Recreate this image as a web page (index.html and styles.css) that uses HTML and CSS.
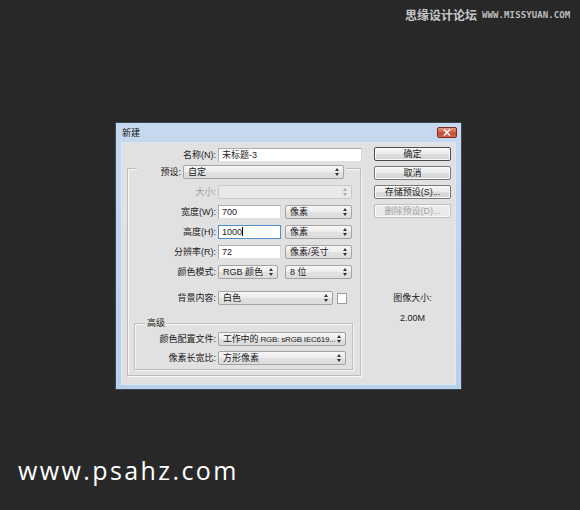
FILE: index.html
```html
<!DOCTYPE html>
<html>
<head>
<meta charset="utf-8">
<title>新建</title>
<link rel="stylesheet" href="styles.css">
</head>
<body>
<div class="dialog">
  <div class="titlebar">
    <span class="title">新建</span>
    <span class="close"><svg width="8" height="7" viewBox="0 0 8 7"><path d="M1 0.5 L7 6.5 M7 0.5 L1 6.5" stroke="#fff" stroke-width="1.6"/></svg></span>
  </div>
  <div class="content">
    <div class="left">
      <div class="row name-row">
        <span class="lbl lbl-name">名称(N):</span>
        <div class="input w144">未标题-3</div>
      </div>
      <div class="group">
        <div class="legend-row">
          <span class="lbl lbl-preset">预设:</span>
          <div class="select w161">自定</div>
        </div>
        <div class="rows">
          <div class="row"><span class="lbl dis">大小:</span><div class="select disabled w134"></div></div>
          <div class="row"><span class="lbl">宽度(W):</span><div class="input w63">700</div><div class="select w67">像素</div></div>
          <div class="row"><span class="lbl">高度(H):</span><div class="input focus w63">1000<span class="caret"></span></div><div class="select w67">像素</div></div>
          <div class="row"><span class="lbl">分辨率(R):</span><div class="input w63">72</div><div class="select w67">像素/英寸</div></div>
          <div class="row"><span class="lbl">颜色模式:</span><div class="select w60">RGB 颜色</div><div class="select w67 sel-gap">8 位</div></div>
          <div class="row bg-row"><span class="lbl">背景内容:</span><div class="select w115">白色</div><span class="swatch"></span></div>
        </div>
        <div class="subgroup">
          <div class="sublegend">高级</div>
          <div class="subrows">
            <div class="row"><span class="lbl lbl-sub">颜色配置文件:</span><div class="select w128 tight">工作中的 <span class="latin">RGB: sRGB IEC619...</span></div></div>
            <div class="row"><span class="lbl lbl-sub">像素长宽比:</span><div class="select w128">方形像素</div></div>
          </div>
        </div>
      </div>
    </div>
    <div class="right">
      <div class="btn default">确定</div>
      <div class="btn">取消</div>
      <div class="btn">存储预设(S)...</div>
      <div class="btn btn-dis">删除预设(D)...</div>
      <div class="info">
        <div class="info-title">图像大小:</div>
        <div class="info-val">2.00M</div>
      </div>
    </div>
  </div>
</div>
<div class="wm-top"><span class="wm-cn">思缘设计论坛</span><span class="wm-en">WWW.MISSYUAN.COM</span></div>
<div class="wm-bottom">www.psahz.com</div>
</body>
</html>
```
FILE: styles.css
```css
* { box-sizing: border-box; }
body {
  margin: 0;
  width: 580px;
  height: 510px;
  padding: 122px 0 0 115px;
  background: #282828;
  position: relative;
  overflow: hidden;
  font-family: "Liberation Sans", "Noto Sans CJK SC", sans-serif;
  font-size: 9px;
  color: #1b1b1b;
}
.dialog {
  width: 347px;
  height: 268px;
  border: 1px solid #3a4653;
  background: linear-gradient(#c6d9ee, #b9d0ea);
  padding: 0 6px 5px 6px;
  display: flex;
  flex-direction: column;
}
.titlebar {
  height: 20px;
  flex: none;
  display: flex;
  align-items: flex-start;
  justify-content: space-between;
}
.title {
  margin-top: 5px;
  line-height: 10px;
  color: #111;
  font-family: "Noto Sans CJK SC", sans-serif;
}
.close {
  margin-top: 4px;
  margin-right: -2px;
  width: 20px;
  height: 11px;
  border: 1px solid #7a2a1e;
  border-radius: 2px;
  background: linear-gradient(#e59a88, #cf5a43 50%, #c0432c 51%, #d46a4f);
  display: flex;
  align-items: center;
  justify-content: center;
}
.close svg { display: block; }
.content {
  flex: 1;
  background: #e1e1e1;
  display: flex;
  box-shadow: 0 0 0 1px #dbe7f4;
}
.left {
  width: 241px;
  padding: 5px 0 0 5px;
  flex: none;
}
.row {
  display: flex;
  align-items: center;
  height: 14px;
}
.lbl {
  width: 88px;
  text-align: right;
  margin-right: 2px;
  line-height: 12px;
  white-space: nowrap;
  flex: none;
}
.lbl-name { width: 89px; }
.lbl-preset { width: 44px; }
.lbl-sub { width: 81px; }
.dis { color: #9a9a9a; }
.input {
  height: 14px;
  background: #fff;
  border: 1px solid #a9acb2;
  border-bottom-color: #dfe3e8;
  border-right-color: #d3d7dc;
  padding-left: 3px;
  line-height: 12px;
  white-space: nowrap;
  flex: none;
}
.input.focus {
  border-color: #4f8fc7;
}
.caret {
  display: inline-block;
  width: 1px;
  height: 9px;
  background: #000;
  vertical-align: -1px;
}
.select {
  position: relative;
  height: 14px;
  border: 1px solid #a3a3a3;
  border-radius: 2px;
  background: linear-gradient(#f7f7f7, #ececec 50%, #e1e1e1 51%, #dcdcdc);
  padding-left: 4px;
  padding-right: 10px;
  line-height: 12px;
  white-space: nowrap;
  overflow: hidden;
  flex: none;
}
.select.tight { letter-spacing: -0.2px; }
.latin { font-size: 8px; }
.select::before,
.select::after {
  content: "";
  position: absolute;
  right: 4px;
  border-left: 2px solid transparent;
  border-right: 2px solid transparent;
}
.select::before { top: 2px; border-bottom: 3px solid #333; }
.select::after { top: 7px; border-top: 3px solid #333; }
.select.disabled {
  background: #e9e9e9;
  border-color: #cacaca;
}
.select.disabled::before { border-bottom-color: #aaa; }
.select.disabled::after { border-top-color: #aaa; }
.w144 { width: 144px; }
.w161 { width: 161px; }
.w134 { width: 134px; }
.w63 { width: 63px; }
.w67 { width: 67px; margin-left: 4px; }
.w60 { width: 60px; }
.sel-gap { margin-left: 7px; }
.w115 { width: 115px; }
.w128 { width: 128px; }
.swatch {
  width: 10px;
  height: 11px;
  margin-left: 4px;
  background: #fff;
  border: 1px solid #9c9c9c;
}
.group {
  margin-top: 6px;
  width: 234px;
  border: 1px solid #bcbcbc;
  box-shadow: inset 1px 1px 0 #f7f7f7, 1px 1px 0 #f7f7f7;
  padding-bottom: 5px;
}
.legend-row {
  display: flex;
  align-items: center;
  width: max-content;
  margin: -4px 0 0 9px;
  padding-right: 2px;
  background: #e1e1e1;
}
.rows {
  margin-top: 6px;
  display: flex;
  flex-direction: column;
  gap: 6px;
}
.bg-row { margin-top: 6px; }
.subgroup {
  margin: 18px 0 0 6px;
  width: 219px;
  border: 1px solid #bcbcbc;
  box-shadow: inset 1px 1px 0 #f7f7f7, 1px 1px 0 #f7f7f7;
  padding-bottom: 4px;
}
.sublegend {
  width: max-content;
  margin: -6px 0 0 10px;
  padding: 0 2px;
  line-height: 11px;
  background: #e1e1e1;
}
.subrows {
  margin-top: 3px;
  display: flex;
  flex-direction: column;
  gap: 5px;
}
.right {
  margin-left: 11px;
  padding-top: 4px;
  width: 77px;
  display: flex;
  flex-direction: column;
  gap: 5px;
}
.btn {
  height: 14px;
  border: 1px solid #767676;
  border-radius: 2px;
  background: linear-gradient(#f6f6f6, #ebebeb 50%, #dedede 51%, #d3d3d3);
  box-shadow: inset 0 0 0 1px #fbfbfb;
  text-align: center;
  line-height: 12px;
  white-space: nowrap;
}
.btn.default { border-color: #4c4c4c; }
.btn-dis {
  color: #a3a3a3;
  border-color: #bdbdbd;
  background: #eaeaea;
}
.info {
  margin-top: 69px;
  text-align: center;
  line-height: 12px;
}
.info-val { margin-top: 8px; }
.wm-top {
  position: absolute;
  top: 7px;
  left: 405px;
  display: flex;
  align-items: center;
  gap: 5px;
  color: #c8c8c8;
}
.wm-cn {
  font-family: "Noto Sans CJK SC", sans-serif;
  font-size: 12px;
  font-weight: 700;
  line-height: 15px;
}
.wm-en {
  font-family: "DejaVu Sans Mono", monospace;
  font-size: 9px;
  font-weight: 700;
  letter-spacing: 0.1px;
  color: #bdbdbd;
}
.wm-bottom {
  position: absolute;
  left: 18px;
  top: 452px;
  font-family: "Open Sans", sans-serif;
  font-size: 25px;
  letter-spacing: 2.4px;
  line-height: 36px;
  color: #fff;
}
```
